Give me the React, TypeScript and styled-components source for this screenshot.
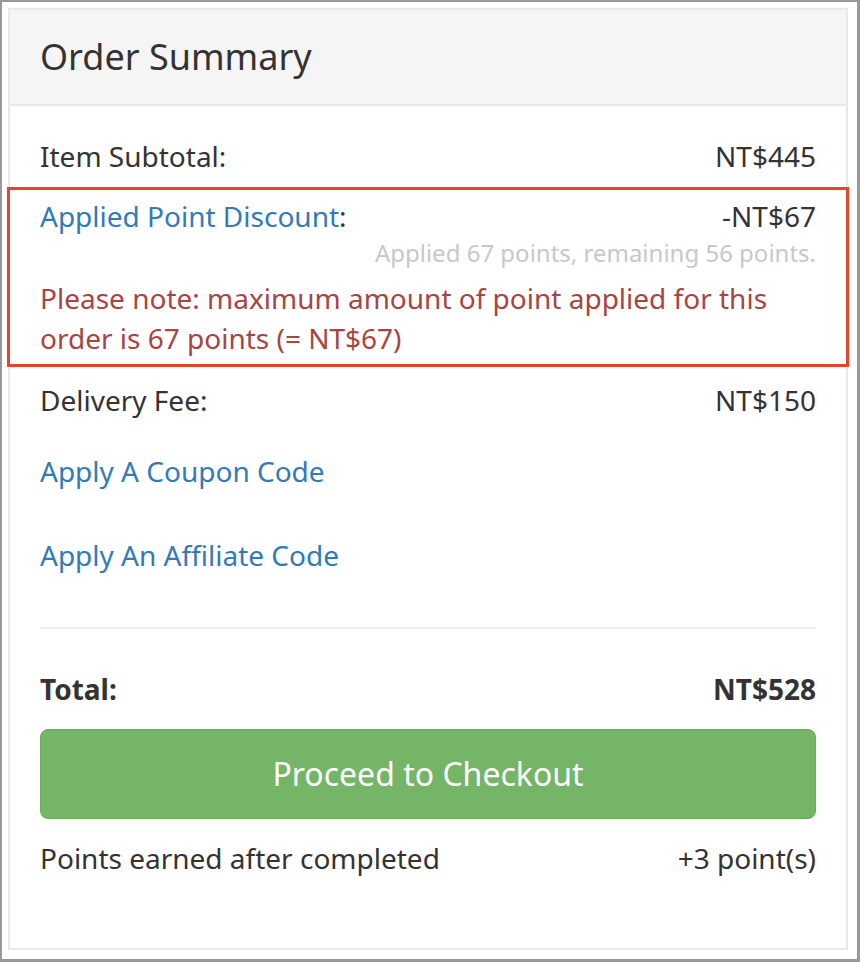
import React from "react";
import styled, { createGlobalStyle } from "styled-components";

const GlobalStyle = createGlobalStyle`
  html, body {
    margin: 0;
    padding: 0;
    background: #ffffff;
  }
  body {
    font-family: "Noto Sans", "Open Sans", "Liberation Sans", sans-serif;
    color: #333333;
  }
  * { box-sizing: border-box; }
`;

const Frame = styled.div`
  width: 860px;
  height: 962px;
  border-style: solid;
  border-color: #999999;
  border-width: 2px 3px 3px 2px;
  padding: 6px 9px 9px 6px;
  background: #ffffff;
`;

const Panel = styled.section`
  width: 840px;
  border: 2px solid #e9e9e9;
  background: #ffffff;
`;

const Header = styled.header`
  height: 94px;
  padding: 0 30px;
  background: #f5f5f5;
  border-bottom: 2px solid #e9e9e9;
  box-sizing: content-box;
`;

const Title = styled.h3`
  margin: 0;
  font-size: 36px;
  font-weight: 400;
  line-height: 94px;
  color: #333333;
`;

const Body = styled.div`
  display: flex;
  flex-direction: column;
  padding: 30px 30px 70px;
`;

const Row = styled.div<{ $gap?: number; $bold?: boolean }>`
  display: flex;
  justify-content: space-between;
  align-items: baseline;
  font-size: 28px;
  line-height: 40px;
  font-weight: ${(p) => (p.$bold ? 700 : 400)};
  margin-bottom: ${(p) => p.$gap ?? 0}px;
`;

const Highlight = styled.div`
  display: flex;
  flex-direction: column;
  margin: 0 -33px 13px;
  padding: 6px 30px;
  border: 3px solid #e8432b;
`;

const Link = styled.a<{ $gap?: number }>`
  display: block;
  font-size: 28px;
  line-height: 40px;
  color: #337ab7;
  text-decoration: none;
  cursor: pointer;
  margin-bottom: ${(p) => p.$gap ?? 0}px;
`;

const InlineLink = styled.a`
  color: #337ab7;
  text-decoration: none;
  cursor: pointer;
`;

const Hint = styled.div`
  text-align: right;
  font-size: 24px;
  line-height: 34px;
  color: #c8c8c8;
`;

const Note = styled.div`
  margin-top: 8px;
  font-size: 28px;
  line-height: 40px;
  color: #a94442;
`;

const Divider = styled.hr`
  margin: 0 0 40px;
  border: 0;
  height: 2px;
  background: #eeeeee;
`;

const CheckoutButton = styled.button`
  display: block;
  width: 100%;
  height: 90px;
  margin-bottom: 19px;
  border: 1px solid #6aac5d;
  border-radius: 8px;
  background: #74b567;
  color: #ffffff;
  font-family: "Noto Sans", "Open Sans", "Liberation Sans", sans-serif;
  font-size: 32px;
  line-height: 44px;
  cursor: pointer;
`;

export default function App() {
  return (
    <>
      <GlobalStyle />
      <Frame>
        <Panel>
          <Header>
            <Title>Order Summary</Title>
          </Header>
          <Body>
            <Row $gap={11}>
              <span>Item Subtotal:</span>
              <span>NT$445</span>
            </Row>
            <Highlight>
              <Row>
                <span>
                  <InlineLink>Applied Point Discount</InlineLink>:
                </span>
                <span>-NT$67</span>
              </Row>
              <Hint>Applied 67 points, remaining 56 points.</Hint>
              <Note>
                Please note: maximum amount of point applied for this order is 67 points (= NT$67)
              </Note>
            </Highlight>
            <Row $gap={31}>
              <span>Delivery Fee:</span>
              <span>NT$150</span>
            </Row>
            <Link $gap={44}>Apply A Coupon Code</Link>
            <Link $gap={52}>Apply An Affiliate Code</Link>
            <Divider />
            <Row $gap={20} $bold>
              <span>Total:</span>
              <span>NT$528</span>
            </Row>
            <CheckoutButton type="button">Proceed to Checkout</CheckoutButton>
            <Row>
              <span>Points earned after completed</span>
              <span>+3 point(s)</span>
            </Row>
          </Body>
        </Panel>
      </Frame>
    </>
  );
}
